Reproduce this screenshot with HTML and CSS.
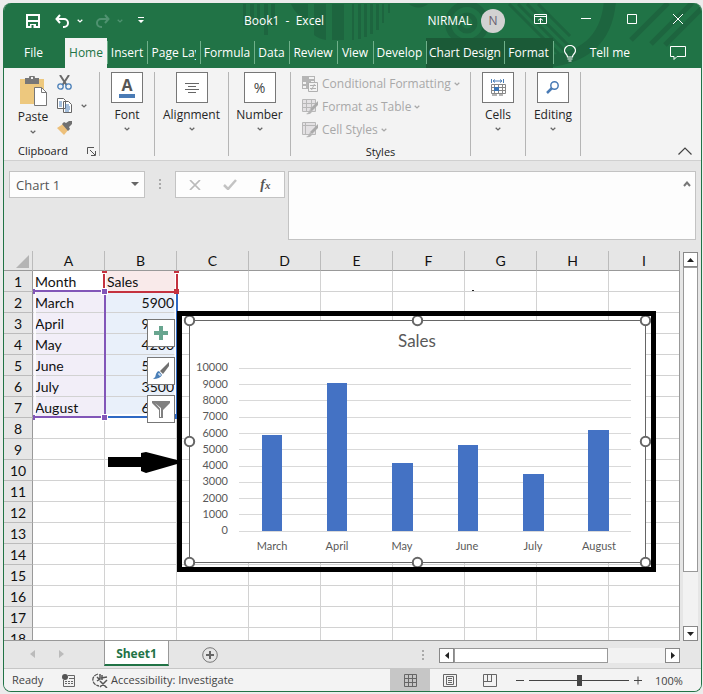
FILE: index.html
```html
<!DOCTYPE html>
<html lang="en">
<head>
<meta charset="utf-8">
<title>Book1 - Excel</title>
<link rel="stylesheet" href="styles.css">
</head>
<body>
<svg class="defs" aria-hidden="true">
  <symbol id="chev" viewBox="0 0 6 4"><path d="M.7 .7 3 2.9 5.3 .7" fill="none" stroke="currentColor" stroke-width="1.3"/></symbol>
  <symbol id="dots" viewBox="0 0 2 11"><path d="M0 0h2v2H0zM0 4h2v2H0zM0 8h2v2H0z" fill="currentColor"/></symbol>
</svg>
<main class="window">
  <header class="head">
    <svg class="pattern" width="697" height="65" viewBox="4 3 697 65" aria-hidden="true">
      <g fill="#1b5c3b" opacity=".6">
        <path d="M243 4h3v22h-3zM250 4h4v22h-4zM257 4h3v22h-3zM264 4h4v31h-4zM271 4h4v22h-4z"/>
        <path d="M291 4h17v16q-12-4-17-16zM314 4h12v36q-7-1-12-5zM332 4h12v36h-12zM352 4h2v36h-2zM358 4h3v35h-3zM364 4h3v33h-3zM370 4h3v30h-3zM376 4h3v26h-3zM382 4h2v19h-2zM388 4h2v9h-2zM409 4h19a14 13 0 0 1-19 0z"/>
      </g>
      <g fill="none" stroke="#1b5c3b" opacity=".6">
        <circle cx="467" cy="23" r="19" stroke-width="6"/><circle cx="467" cy="23" r="8" stroke-width="5"/>
        <path d="M509 4l50 50M518 4l48 48M527 4l42 42M538 4l32 32" stroke-width="3"/>
        <path d="M610 0q-4 60-72 62" stroke-width="12"/>
        <path d="M631 40 668 3M651 44 692 3M665 45 702 8" stroke-width="5"/>
      </g>
    </svg>
    <div class="titlebar">
      <div class="quick">
        <button aria-label="Save"><svg width="14" height="14"><path d="M1 1h12v12H1z" fill="none" stroke="#fff" stroke-width="2"/><path d="M1 6h12v2H1zM4 10h6v4H4z" fill="#fff"/><path d="M5.500 11h2v3h-2z" fill="#217346"/></svg></button>
        <button aria-label="Undo"><svg width="15" height="14"><path d="M5 1 1.500 5 5 9M2 5h7a4 4 0 0 1 0 8H8" fill="none" stroke="#fff" stroke-width="2"/></svg></button>
        <button aria-label="Undo list"><svg width="6" height="4"><use href="#chev"/></svg></button>
        <button class="dim redo" aria-label="Redo"><svg width="15" height="14"><path d="M10 1l3.500 4L10 9M13 5H6a4 4 0 0 0 0 8h1" fill="none" stroke="currentColor" stroke-width="2"/></svg></button>
        <button class="dim" aria-label="Redo list"><svg width="6" height="4"><use href="#chev"/></svg></button>
        <button class="custom" aria-label="Customize toolbar"><svg width="6" height="7"><path d="M0 0h6v1H0zM0 3h6L3 6z" fill="#fff"/></svg></button>
      </div>
      <div class="doc">Book1&nbsp; -&nbsp; Excel</div>
      <div class="user"><span>NIRMAL</span><span class="avatar">N</span></div>
      <div class="controls">
        <button aria-label="Ribbon display options"><svg width="13" height="10"><path d="M.5.5h12v9H.5zM0 2.500h13M6.500 9V4.500M4 6.500l2.500-2 2.500 2" fill="none" stroke="#fff"/></svg></button>
        <button aria-label="Minimize"><svg width="10" height="10"><path d="M0 4.500h10" stroke="#fff"/></svg></button>
        <button aria-label="Maximize"><svg width="10" height="10"><path d="M.5.5h9v9h-9z" fill="none" stroke="#fff"/></svg></button>
        <button aria-label="Close"><svg width="10" height="10"><path d="M0 0l10 10M10 0 0 10" stroke="#fff"/></svg></button>
      </div>
    </div>
    <nav class="tabs">
      <button class="file">File</button><button class="home">Home</button><button class="w40">Insert</button><button class="w53 page"><span>Page Lay</span></button><button class="w54">Formula</button><button class="w35">Data</button><button class="w48">Review</button><button class="w36">View</button><button class="w53">Develop</button><button class="ctx w78">Chart Design</button><button class="ctx w49">Format</button><button class="tell"><svg width="12" height="17"><path d="M3.500 12c0-3-3-3-3-6.500a5.500 5 0 0 1 11 0c0 3.500-3 3.500-3 6.500zM3.500 14h5M4.500 16h3" fill="none" stroke="#fff" stroke-width="1.200"/></svg>Tell me</button>
      <button class="comment" aria-label="Comments"><svg width="17" height="15"><path d="M.5.5h15v10H7l-3 3v-3H.5z" fill="none" stroke="#fff"/></svg></button>
    </nav>
  </header>

  <section class="ribbon">
    <div class="group clip">
      <div class="cliprow">
        <button class="paste"><svg width="29" height="31"><path d="M1 3h24v25H1z" fill="#edc87e"/><path d="M6 2h4a3 3 0 0 1 6 0h4v6H6z" fill="#777"/><path d="M12 1h2v2h-2z" fill="#f3f3f3"/><path d="M15.500 11.500h7l5 5v13h-12z" fill="#fff" stroke="#777"/><path d="M22.500 11.500v5h5" fill="none" stroke="#777"/></svg>
          <span>Paste</span><svg width="6" height="4"><use href="#chev"/></svg></button>
        <div class="clipicons">
          <button aria-label="Cut"><svg width="15" height="15"><path d="M3 0l6.500 10M12 0 5.500 10" stroke="#6a6a6a" stroke-width="2"/><g fill="none" stroke="#4a7fb8" stroke-width="1.300"><circle cx="3.500" cy="11.500" r="2.700"/><circle cx="11.500" cy="11.500" r="2.700"/></g></svg></button>
          <div class="copyrow"><button aria-label="Copy"><svg width="16" height="15"><path d="M.5.5h6l2 2v8h-8zM6.500 3.500h5l3 3v8h-8z" fill="#fff" stroke="#666"/><path d="M2 4h3M2 6h3M2 8h3M8 7h4M8 9h5M8 11h5M8 13h4" stroke="#4a7fb8"/></svg></button><button aria-label="Copy options"><svg width="6" height="4"><use href="#chev"/></svg></button></div>
          <button aria-label="Format painter"><svg width="16" height="14"><path d="M0 7l6-4 6 5-5 6z" fill="#edc07a"/><path d="M5 3l2-2 2 1 3-2h3v3l-3 3 1 2-2 2z" fill="#707070"/></svg></button>
        </div>
      </div>
      <div class="caption"><span>Clipboard</span><button aria-label="Clipboard settings"><svg width="9" height="9"><path d="M.5 7V.5H7M3 3l5 5M8.500 4v4.500H4" fill="none" stroke="#555"/></svg></button></div>
    </div>
    <button class="group w55"><span class="box"><svg width="18" height="24"><text x="9" y="15" class="bigA">A</text><path d="M1 18h16v4H1z" fill="#4a7bb5"/></svg></span><span>Font</span><svg width="6" height="4"><use href="#chev"/></svg></button>
    <button class="group w74"><span class="box"><svg width="14" height="10"><path d="M0 .5h14M3 3.500h8M0 6.500h14M3 9.500h8" stroke="#666"/></svg></span><span>Alignment</span><svg width="6" height="4"><use href="#chev"/></svg></button>
    <button class="group w62"><span class="box pct">%</span><span>Number</span><svg width="6" height="4"><use href="#chev"/></svg></button>
    <div class="group styles">
      <button><svg width="17" height="16"><path d="M0 0h13v13H0z" fill="#b5b5b5"/><path d="M7 1h5v2H7zM9 5h3v3H9zM1 6h3v2H1zM1 10h3v2H1z" fill="#f3f3f3"/><path d="M6.500 6.500h9v9h-9z" fill="#f3f3f3" stroke="#b0b0b0"/><path d="M8 9.500h6M8 12.500h6M12.500 8l-3 6" stroke="#b0b0b0"/></svg>Conditional Formatting<svg width="6" height="4"><use href="#chev"/></svg></button>
      <button><svg width="17" height="16"><path d="M.5.5h13v12H.5zM0 4.500h13M0 8.500h13M4.500 0v13M9.500 0v13" fill="#e3e1e3" stroke="#b8b8b8"/><path d="M16 2v4l-6 6-2-2z" fill="#aaa"/><path d="M8 10l2 3q-2 3-6 2 3-1 4-5z" fill="#b5b5b5"/></svg>Format as Table<svg width="6" height="4"><use href="#chev"/></svg></button>
      <button><svg width="17" height="16"><path d="M.5.5h13v12H.5zM0 3.500h13M3.500 0v13" fill="#e3e1e3" stroke="#b8b8b8"/><path d="M16 2v4l-6 6-2-2z" fill="#aaa"/><path d="M8 10l2 3q-2 3-6 2 3-1 4-5z" fill="#b5b5b5"/></svg>Cell Styles<svg width="6" height="4"><use href="#chev"/></svg></button>
      <div class="caption"><span>Styles</span></div>
    </div>
    <button class="group w55"><span class="box"><svg width="15" height="17"><path d="M.5 0v4M12.500 0v4M2 2h9M4 .5 2 2l2 1.500M9 .5 11 2 9 3.500" fill="none" stroke="#4a7fb8"/><path d="M.5 5.500h14v9H.5zM0 8.500h15M0 11.500h15M3.500 5v10M7.500 5v10M11.500 5v10" fill="#fff" stroke="#888"/><path d="M3 8h5v4H3z" fill="#3a75b5"/><path d="M1 16h5M8 16h4" stroke="#666"/></svg></span><span>Cells</span><svg width="6" height="4"><use href="#chev"/></svg></button>
    <button class="group w55"><span class="box"><svg width="14" height="13"><circle cx="8.500" cy="4.500" r="3.700" fill="none" stroke="#4a7bb5" stroke-width="1.500"/><path d="M6 7 1 12" stroke="#4a7bb5" stroke-width="2.500"/></svg></span><span>Editing</span><svg width="6" height="4"><use href="#chev"/></svg></button>
    <button class="collapse" aria-label="Collapse ribbon"><svg width="14" height="8"><path d="M.5 7.500 7 1l6.500 6.500" fill="none" stroke="#444" stroke-width="1.200"/></svg></button>
  </section>

  <section class="formulabar">
    <div class="namebox"><input aria-label="Name box" value="Chart 1"><button aria-label="Names"><svg width="8" height="5"><path d="M0 0h8L4 4z" fill="#666"/></svg></button></div>
    <svg class="grip" width="2" height="11"><use href="#dots"/></svg>
    <div class="fxbox">
      <button aria-label="Cancel"><svg width="12" height="10"><path d="M1 0l10 10M11 0 1 10" stroke="#bbb" stroke-width="1.700"/></svg></button>
      <button aria-label="Enter"><svg width="14" height="11"><path d="M1 6l4 4 8-9" fill="none" stroke="#c3c3c3" stroke-width="2.500"/></svg></button>
      <button class="fx" aria-label="Insert function">f<small>x</small></button>
    </div>
    <div class="formula"><textarea aria-label="Formula"></textarea><button aria-label="Collapse formula bar"><svg width="8" height="6"><path d="M1 5l3-3.500L7 5" fill="none" stroke="#777" stroke-width="2"/></svg></button></div>
  </section>

  <section class="work">
    <div class="sheet">
      <table>
        <colgroup><col class="rowcol"><col class="c"><col class="c"><col class="c"><col class="c"><col class="c"><col class="c"><col class="c"><col class="c"><col></colgroup>
        <thead><tr><th><svg class="corner" width="13" height="13"><path d="M13 0v13H0z" fill="#b4b4b4"/></svg></th><th>A</th><th>B</th><th>C</th><th>D</th><th>E</th><th>F</th><th>G</th><th>H</th><th>I</th></tr></thead>
        <tbody>
          <tr><th>1</th><td>Month</td><td class="r">Sales</td><td></td><td></td><td></td><td></td><td></td><td></td><td></td></tr>
          <tr><th>2</th><td class="p">March</td><td class="b">5900</td><td></td><td></td><td></td><td></td><td></td><td></td><td></td></tr>
          <tr><th>3</th><td class="p">April</td><td class="b">9100</td><td></td><td></td><td></td><td></td><td></td><td></td><td></td></tr>
          <tr><th>4</th><td class="p">May</td><td class="b">4200</td><td></td><td></td><td></td><td></td><td></td><td></td><td></td></tr>
          <tr><th>5</th><td class="p">June</td><td class="b">5300</td><td></td><td></td><td></td><td></td><td></td><td></td><td></td></tr>
          <tr><th>6</th><td class="p">July</td><td class="b">3500</td><td></td><td></td><td></td><td></td><td></td><td></td><td></td></tr>
          <tr><th>7</th><td class="p">August</td><td class="b">6200</td><td></td><td></td><td></td><td></td><td></td><td></td><td></td></tr>
          <tr><th>8</th><td></td><td></td><td></td><td></td><td></td><td></td><td></td><td></td><td></td></tr>
          <tr><th>9</th><td></td><td></td><td></td><td></td><td></td><td></td><td></td><td></td><td></td></tr>
          <tr><th>10</th><td></td><td></td><td></td><td></td><td></td><td></td><td></td><td></td><td></td></tr>
          <tr><th>11</th><td></td><td></td><td></td><td></td><td></td><td></td><td></td><td></td><td></td></tr>
          <tr><th>12</th><td></td><td></td><td></td><td></td><td></td><td></td><td></td><td></td><td></td></tr>
          <tr><th>13</th><td></td><td></td><td></td><td></td><td></td><td></td><td></td><td></td><td></td></tr>
          <tr><th>14</th><td></td><td></td><td></td><td></td><td></td><td></td><td></td><td></td><td></td></tr>
          <tr><th>15</th><td></td><td></td><td></td><td></td><td></td><td></td><td></td><td></td><td></td></tr>
          <tr><th>16</th><td></td><td></td><td></td><td></td><td></td><td></td><td></td><td></td><td></td></tr>
          <tr><th>17</th><td></td><td></td><td></td><td></td><td></td><td></td><td></td><td></td><td></td></tr>
          <tr><th>18</th><td></td><td></td><td></td><td></td><td></td><td></td><td></td><td></td><td></td></tr>
        </tbody>
      </table>
      <svg class="ranges" width="676" height="390" viewBox="4 251 676 390" aria-hidden="true">
        <path d="M105 416.500h72M177 294v123" stroke="#fff" stroke-width="5"/>
        <path d="M105 417h72" stroke="#2f69c4" stroke-width="2"/><path d="M177 294v124" stroke="#2f69c4" stroke-width="2"/><path d="M174 414h5v5h-5z" fill="#2f69c4"/>
        <path d="M35 292v126" stroke="#fff" stroke-width="2" opacity=".8"/>
        <path d="M33 291h71M33 417h71M105 292v125" stroke="#8256b8" stroke-width="2" fill="none"/>
        <path d="M33 289h2v5h-2zM33 415h2v5h-2z" fill="#8256b8"/>
        <path d="M104 271v20M177 271v20" stroke="#fff" stroke-width="4"/>
        <path d="M104 274v15M177 274v15M106 292h70" stroke="#c4323f" stroke-width="2"/>
        <path d="M102 271h5v2h-5zM174 271h5v2h-5zM174 289h5v5h-5z" fill="#c4323f"/>
        <path d="M101 288h7v7h-7zM101 414h7v7h-7z" fill="#fff"/><path d="M102 289h5v5h-5zM102 415h5v5h-5z" fill="#8256b8"/>
        <path d="M472 290h2v1h-2z" fill="#222"/>
        <path d="M108 457h33v-4l5-1 31 8v4l-31 9-5-2v-4h-33z" fill="#000"/>
      </svg>
      <div class="chartframe">
        <svg width="469" height="251" viewBox="182 316 469 251" role="img" aria-label="Sales by month">
          <path d="M189.500 320.500h456v242h-456z" fill="#fff" stroke="#666"/>
          <path d="M239 368.500h392M239 384.500h392M239 400.500h392M239 417.500h392M239 433.500h392M239 449.500h392M239 466.500h392M239 482.500h392M239 498.500h392M239 514.500h392M239 531.500h392" stroke="#d9d9d9"/>
          <path d="M262 435h20v96h-20zM327 383h20v148h-20zM392 463h21v68h-21zM458 445h20v86h-20zM523 474h21v57h-21zM588 430h21v101h-21z" fill="#4472c4"/>
          <text class="ctitle" x="417" y="347">Sales</text>
          <g class="vals"><text x="228" y="371">10000</text><text x="228" y="388">9000</text><text x="228" y="404">8000</text><text x="228" y="420">7000</text><text x="228" y="437">6000</text><text x="228" y="453">5000</text><text x="228" y="469">4000</text><text x="228" y="485">3000</text><text x="228" y="502">2000</text><text x="228" y="518">1000</text><text x="228" y="534">0</text></g>
          <g class="cats"><text x="272" y="550">March</text><text x="337" y="550">April</text><text x="402" y="550">May</text><text x="467" y="550">June</text><text x="533" y="550">July</text><text x="599" y="550">August</text></g>
          <g fill="#fff" stroke="#666" stroke-width="2"><circle cx="189.500" cy="320.500" r="4.700"/><circle cx="417.500" cy="320.500" r="4.700"/><circle cx="645.500" cy="320.500" r="4.700"/><circle cx="189.500" cy="441.500" r="4.700"/><circle cx="645.500" cy="441.500" r="4.700"/><circle cx="189.500" cy="562.500" r="4.700"/><circle cx="417.500" cy="562.500" r="4.700"/><circle cx="645.500" cy="562.500" r="4.700"/></g>
        </svg>
      </div>
      <div class="charttools">
        <button aria-label="Chart elements"><svg width="14" height="14"><path d="M5 0h4v5h5v4H9v5H5V9H0V5h5z" fill="#68a58f"/></svg></button>
        <button aria-label="Chart styles"><svg width="18" height="18"><path d="M17 0v4l-6 8-3-3z" fill="#707070"/><path d="M7 9l3 4q-2 4-9 4 3-2 3-5 1-3 3-3z" fill="#4a7fb8"/><path d="M6 12q3-1 2 2" fill="none" stroke="#fff"/></svg></button>
        <button aria-label="Chart filters"><svg width="18" height="17"><path d="M0 0h18v2l-7 7v8H7V9L0 2z" fill="#808080"/><path d="M3 2l5 5.500V16h1V7z" fill="#fff"/></svg></button>
      </div>
    </div>
    <div class="vscroll">
      <button aria-label="Scroll up"><svg width="7" height="4"><path d="M3.500 0 7 4H0z" fill="#222"/></svg></button>
      <div class="vtrack"><div class="vthumb"></div></div>
      <button aria-label="Scroll down"><svg width="7" height="4"><path d="M0 0h7L3.500 4z" fill="#222"/></svg></button>
    </div>
  </section>

  <section class="sheetbar">
    <div class="sheetnav"><button aria-label="Previous sheet"><svg width="5" height="8"><path d="M5 0v8L0 4z" fill="#bbb"/></svg></button><button aria-label="Next sheet"><svg width="5" height="8"><path d="M0 0v8l5-4z" fill="#bbb"/></svg></button></div>
    <button class="sheettab">Sheet1</button>
    <button class="add" aria-label="New sheet"><svg width="16" height="16"><circle cx="8" cy="8" r="7.300" fill="none" stroke="#777"/><path d="M4 8h8M8 4v8" stroke="#666" stroke-width="2"/></svg></button>
    <svg class="grip" width="2" height="11"><use href="#dots"/></svg>
    <div class="hscroll">
      <button aria-label="Scroll left"><svg width="4" height="7"><path d="M4 0v7L0 3.500z" fill="#222"/></svg></button>
      <div class="htrack"><div class="hthumb"></div></div>
      <button aria-label="Scroll right"><svg width="4" height="7"><path d="M0 0v7l4-3.500z" fill="#222"/></svg></button>
    </div>
  </section>

  <footer class="status">
    <span class="ready">Ready</span>
    <button class="macro" aria-label="Record macro"><svg width="13" height="13"><path d="M6 1.500h6.500v11h-11V6" fill="none" stroke="#666"/><circle cx="3" cy="3" r="3" fill="#555"/><path d="M7 4.500h6M3 7.500h2M6 7.500h2M9 7.500h2M3 9.500h2M6 9.500h2M9 9.500h2" stroke="#666"/></svg></button>
    <button class="access"><svg width="17" height="15"><path d="M6 1Q0 3 1 8q1 4 6 5" fill="none" stroke="#555" stroke-width="1.300" stroke-dasharray="4 1"/><path d="M8 1v5l-3 2M5 4l3 3M9 5l6-1M10 2v5M8 14l7-7M8 8l7 7" fill="none" stroke="#555" stroke-width="1.500"/></svg>Accessibility: Investigate</button>
    <div class="views">
      <button class="on" aria-label="Normal view"><svg width="13" height="13"><path d="M.5.5h12v12H.5zM0 4.500h13M0 8.500h13M4.500 0v13M8.500 0v13" fill="none" stroke="#666"/></svg></button>
      <button aria-label="Page layout view"><svg width="14" height="13"><path d="M.5.5h13v12H.5zM3.500 2.500h7v8h-7zM5 4.500h4M5 6.500h4M5 8.500h4" fill="none" stroke="#666"/></svg></button>
      <button aria-label="Page break preview"><svg width="14" height="13"><path d="M.5.5h13v12H.5zM4.500 0v7.500M8.500 0v7.500M0 7.500h9" fill="none" stroke="#666"/></svg></button>
    </div>
    <div class="zoom"><button aria-label="Zoom out"><svg width="8" height="9"><path d="M0 4.500h8" stroke="#444"/></svg></button><input type="range" aria-label="Zoom" min="0" max="200" value="100"><button aria-label="Zoom in"><svg width="8" height="9"><path d="M0 4.500h8M4 .5v8" stroke="#444"/></svg></button><span>100%</span></div>
  </footer>
</main>
</body>
</html>
```
FILE: styles.css
```css
* { box-sizing: border-box; }
body { margin: 0; background: #ececec; font: 12px/16px "Open Sans", "Noto Sans", sans-serif; color: #262626; }
button { border: 0; padding: 0; margin: 0; background: none; font: inherit; color: inherit; display: flex; align-items: center; justify-content: center; white-space: nowrap; }
svg { display: block; flex: none; }
.defs { position: absolute; width: 0; height: 0; }
.window { margin: 3px 1px 0 3px; height: calc(100vh - 5px); display: flex; flex-direction: column; border: 1px solid #217346; border-top: 0; border-radius: 8px; overflow: hidden; background: #e6e6e6; }

.head { position: relative; background: #217346; color: #fff; flex: none; }
.pattern { position: absolute; top: 0; right: 0; }
.titlebar, .tabs { position: relative; display: flex; align-items: center; }
.titlebar { height: 35px; }
.quick { display: flex; align-items: center; width: 240px; padding-left: 22px; gap: 7px; }
.quick button:nth-child(2) { margin-left: 8px; }
.quick .redo { margin-left: 5px; }
.quick .custom { margin-left: 8px; }
.dim { color: #4f9270; }
.doc { flex: 1; }
.user { display: flex; align-items: center; gap: 9px; }
.avatar { width: 24px; height: 24px; border-radius: 50%; background: #d2d2d2; color: #665e70; text-align: center; line-height: 24px; }
.controls { display: flex; width: 196px; padding: 0 0 3px 12px; }
.controls button { width: 46px; height: 24px; }
.tabs { height: 30px; }
.tabs button { height: 30px; position: relative; flex: none; }
.tabs button:nth-child(n+3):nth-child(-n+12)::before { content: ""; position: absolute; left: 0; top: 3px; height: 23px; border-left: 1px solid #6fb08a; }
.tabs .file { width: 61px; padding-right: 2px; }
.tabs .home { width: 42px; background: #f3f3f3; color: #217346; }
.page span { overflow: hidden; width: 44px; text-align: left; }
.tabs .tell { width: 77px; gap: 14px; justify-content: flex-end; }
.tabs .comment { margin-left: auto; width: 46px; }
.w35 { width: 35px; } .w36 { width: 36px; } .w40 { width: 40px; } .w48 { width: 48px; } .w49 { width: 49px; }
.w53 { width: 53px; } .w54 { width: 54px; } .w55 { width: 55px; } .w62 { width: 62px; } .w74 { width: 74px; } .w78 { width: 78px; }
.ctx { background: #1b5a37; }

.ribbon { display: flex; align-items: flex-start; background: #f3f3f3; padding: 4px 0; height: 93px; border-bottom: 1px solid #d0d0d0; flex: none; }
.group { flex: none; height: 84px; border-right: 1px solid #b5b5b5; }
button.group { flex-direction: column; justify-content: flex-start; gap: 4px; border-right: 1px solid #b5b5b5; }
.group use { color: #666; }
.styles use { color: #a8a8a8; }
.box { width: 32px; height: 31px; border: 1px solid #777; background: #fff; display: flex; align-items: center; justify-content: center; }
.bigA { font: bold 16px "Open Sans", sans-serif; text-anchor: middle; fill: #555; }
.pct { font-size: 14px; color: #444; }
.clip { width: 96px; display: flex; flex-direction: column; justify-content: space-between; }
.cliprow { display: flex; padding-left: 12px; gap: 7px; }
.paste { flex-direction: column; width: 34px; padding-top: 4px; gap: 2px; justify-content: flex-start; }
.paste svg:last-child { margin-top: 3px; }
.clipicons { display: flex; flex-direction: column; align-items: flex-start; gap: 8px; padding-top: 3px; }
.copyrow { display: flex; gap: 8px; }
.caption { display: flex; justify-content: center; font-size: 11px; line-height: 8px; color: #222; }
.clip .caption { justify-content: space-between; padding: 0 3px 0 14px; }
.styles { width: 180px; display: flex; flex-direction: column; padding-left: 11px; color: #a8a8a8; }
.styles button { height: 23px; gap: 3px; justify-content: flex-start; }
.styles .caption { margin-top: auto; padding-right: 11px; }
.collapse { margin: auto 8px 0 auto; width: 16px; height: 10px; }

.formulabar { display: flex; align-items: flex-start; padding: 10px 5px 11px; flex: none; }
.namebox, .fxbox, .formula { background: #fdfdfd; border: 1px solid #c3c3c3; display: flex; }
.namebox { width: 136px; height: 27px; }
.namebox input { flex: 1; min-width: 0; border: 0; background: none; padding: 0 6px; font: 13px "Open Sans", sans-serif; color: #555; }
.namebox button { width: 19px; }
.grip { color: #aaa; }
.formulabar .grip { margin: 8px 14px 0; }
.fxbox { width: 110px; height: 27px; padding: 0 1px; }
.fxbox button { flex: 1; }
.fxbox .fx { font: italic bold 14px "Liberation Serif", serif; color: #555; }
.fx small { font-size: 11px; }
.formula { flex: 1; height: 69px; margin-left: 3px; }
.formula textarea { flex: 1; min-width: 0; border: 0; background: none; resize: none; }
.formula button { width: 16px; height: 24px; }

.work { flex: 1; min-height: 0; display: flex; }
.sheet { flex: 1; position: relative; overflow: hidden; border-right: 1px solid #999; border-bottom: 1px solid #999; background: #fff; }
table { width: 100%; table-layout: fixed; border-collapse: separate; border-spacing: 0; font: 14px/18px Lato, sans-serif; color: #111; }
.rowcol { width: 29px; }
.c { width: 72px; }
th { font-weight: 400; background: #e6e6e6; height: 21px; padding: 2px 0 0; border-right: 1px solid #999; border-bottom: 1px solid #bbb; }
thead th { height: 20px; padding: 0; line-height: 19px; border-bottom-color: #999; border-right-color: #bbb; }
.corner { margin: 2px 3px 0 auto; }
td { height: 21px; padding: 2px 2px 0; border-right: 1px solid #d2d2d2; border-bottom: 1px solid #d2d2d2; }
tr > :last-child { border-right: 0; }
.r { background: #f9eaea; }
.p { background: #f2eef8; }
.b { background: #e9f0fa; text-align: right; }
.ranges { position: absolute; left: 0; top: 0; }
.chartframe { position: absolute; left: 173px; top: 60px; border: 5px solid #000; }
.chartframe text { font-family: Lato, sans-serif; font-size: 11px; fill: #595959; }
.chartframe .ctitle { font-size: 17px; text-anchor: middle; }
.vals { text-anchor: end; }
.cats { text-anchor: middle; }
.charttools { position: absolute; left: 143px; top: 68px; display: flex; flex-direction: column; gap: 10px; }
.charttools button { width: 28px; height: 28px; background: #fff; border: 1px solid #777; }

.vscroll { width: 21px; padding: 1px 3px 0; display: flex; flex-direction: column; }
.vscroll button, .hscroll button { background: #fff; border: 1px solid #888; width: 15px; height: 15px; flex: none; }
.vtrack { flex: 1; background: #f2f2f2; }
.vthumb { height: 85%; background: #fff; border: 1px solid #999; }

.sheetbar { height: 28px; display: flex; align-items: flex-start; flex: none; border-bottom: 1px solid #c6c6c6; }
.sheetnav { width: 100px; display: flex; gap: 24px; padding: 9px 0 0 26px; }
.sheettab { width: 65px; height: 25px; padding-top: 2px; background: #fff; color: #217346; font-weight: 700; border: 1px solid #999; border-top: 0; border-bottom: 2px solid #217346; }
.add { margin: 6px auto 0 33px; }
.sheetbar .grip { margin: 9px 15px 0; }
.hscroll { width: 241px; display: flex; margin: 7px 21px 0 0; }
.htrack { flex: 1; background: #f2f2f2; }
.hthumb { width: 73%; height: 15px; background: #fff; border: 1px solid #999; }

.status { height: 22px; display: flex; align-items: stretch; background: #f3f3f3; font-size: 11px; flex: none; color: #444; }
.status span { line-height: 21px; }
.ready { padding-left: 8px; width: 58px; }
.macro { width: 13px; }
.access { margin-left: 17px; gap: 2px; }
.views { display: flex; margin-left: auto; }
.views button { width: 40px; }
.views .on { background: #c6c6c6; }
.zoom { display: flex; align-items: center; width: 191px; padding-left: 6px; }
.zoom input { appearance: none; width: 100px; height: 11px; margin: 0 5px; background: linear-gradient(#444, #444) center / 100% 1px no-repeat; }
.zoom input::-webkit-slider-thumb { appearance: none; width: 5px; height: 11px; background: #444; }
.zoom span { margin-left: 13px; }
```
